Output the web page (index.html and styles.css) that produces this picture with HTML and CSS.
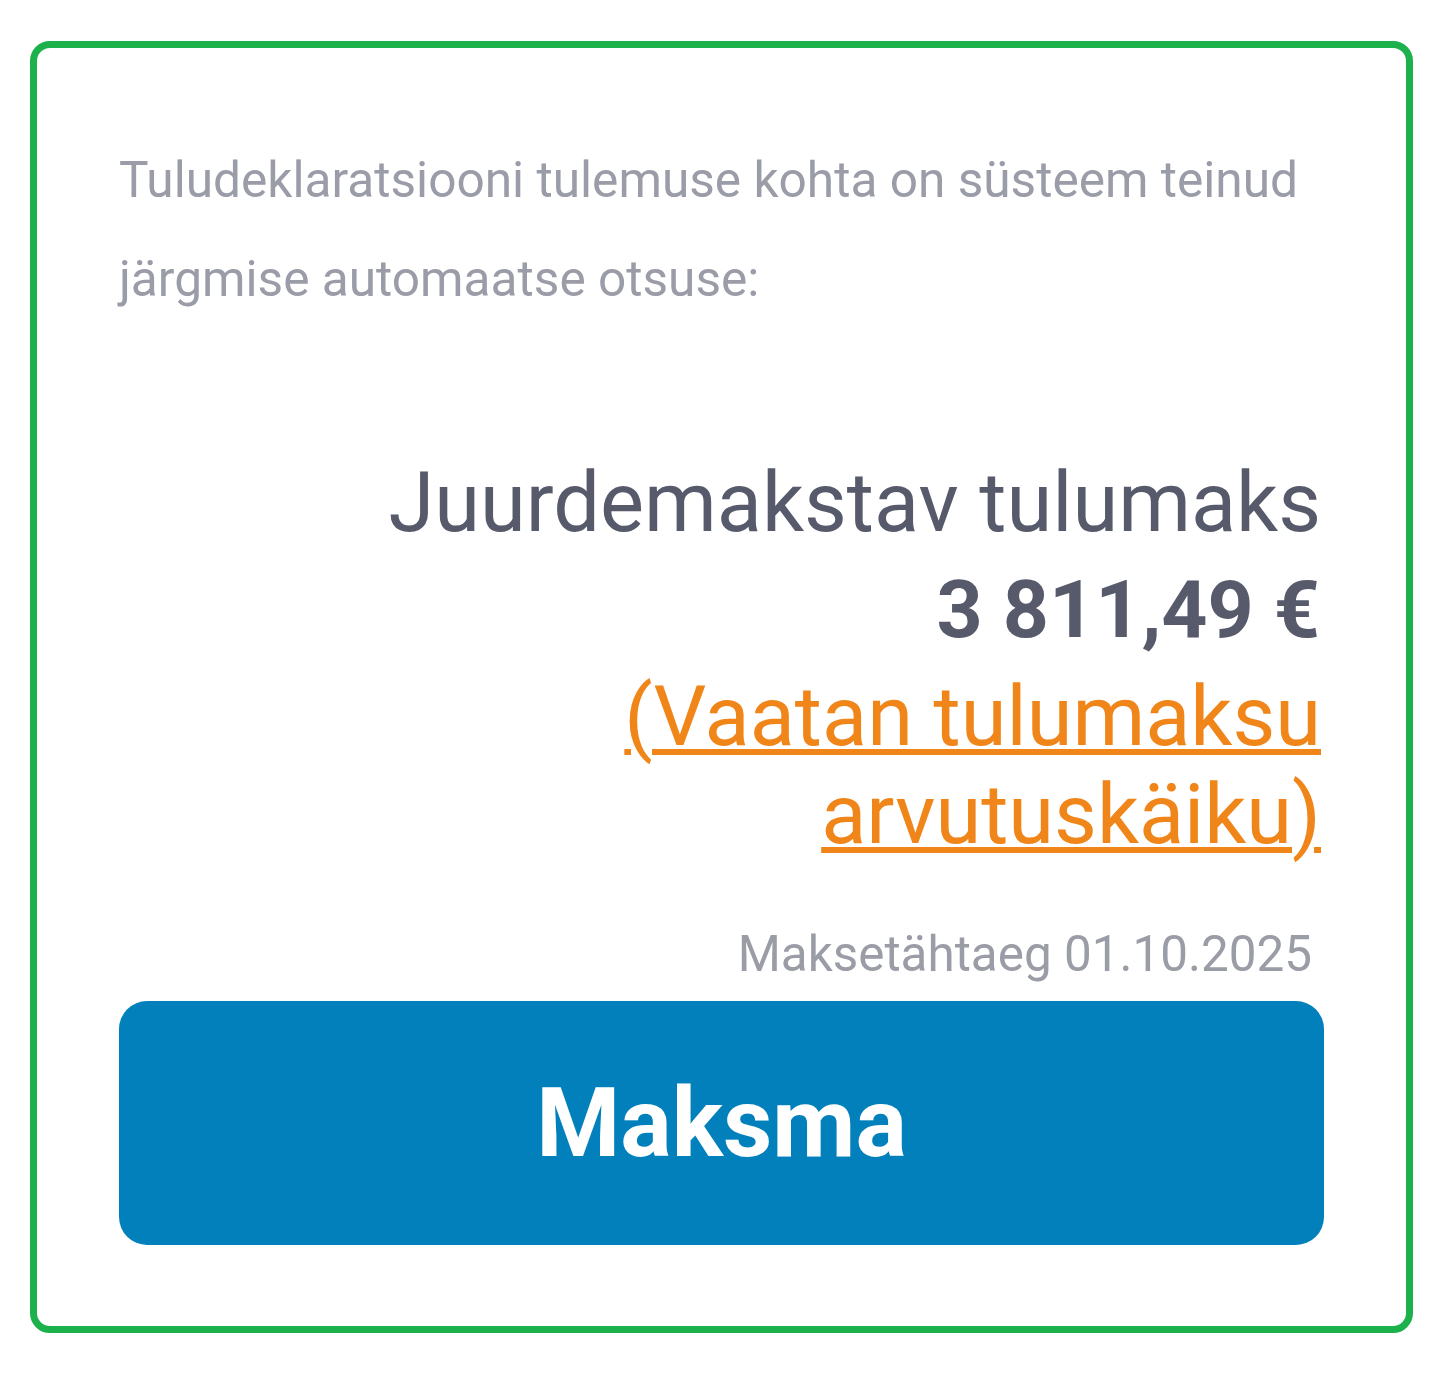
FILE: index.html
```html
<!DOCTYPE html>
<html lang="et">
<head>
<meta charset="utf-8">
<title>Tulumaks</title>
<link rel="stylesheet" href="styles.css">
</head>
<body>
<div class="card">
  <p class="intro">Tuludeklaratsiooni tulemuse kohta on süsteem teinud järgmise automaatse otsuse:</p>
  <div class="result">
    <div class="label">Juurdemakstav tulumaks</div>
    <div class="amount">3 811,49 €</div>
    <a class="link" href="#">(Vaatan tulumaksu arvutuskäiku)</a>
  </div>
  <div class="due">Maksetähtaeg 01.10.2025</div>
  <button class="pay" type="button">Maksma</button>
</div>
</body>
</html>
```

FILE: styles.css
```css
html, body {
  margin: 0;
  padding: 0;
  background: #ffffff;
}
body {
  font-family: Roboto, "Liberation Sans", Arial, sans-serif;
  padding: 41px 29px 41px 30px;
}
.card {
  box-sizing: border-box;
  width: 1383px;
  height: 1292px;
  border: 7px solid #1db14b;
  border-radius: 20px;
  padding: 83px 82px 81px 82px;
  display: flex;
  flex-direction: column;
}
.intro {
  margin: 0;
  font-size: 49.6px;
  line-height: 99px;
  color: #9a9ca8;
}
.result {
  margin-top: 120px;
  padding-right: 3px;
  display: flex;
  flex-direction: column;
  align-items: flex-end;
  text-align: right;
  color: #575a6b;
}
.label {
  font-size: 83px;
  line-height: 107px;
}
.amount {
  font-size: 80.6px;
  line-height: 107px;
  font-weight: 700;
  padding-right: 1px;
}
.link {
  margin-top: 5px;
  font-size: 83px;
  line-height: 98px;
  color: #f08519;
  text-decoration: underline;
  text-decoration-thickness: 6px;
  text-underline-offset: 4px;
  max-width: 740px;
}
.due {
  margin-top: 62px;
  align-self: flex-end;
  padding-right: 12px;
  font-size: 49.4px;
  line-height: 56px;
  color: #9a9ca6;
}
.pay {
  margin-top: 19px;
  height: 244px;
  width: 100%;
  border: none;
  border-radius: 28px;
  background: #0280bc;
  color: #ffffff;
  font-family: Roboto, "Liberation Sans", Arial, sans-serif;
  font-size: 96px;
  font-weight: 700;
  cursor: pointer;
}
```
